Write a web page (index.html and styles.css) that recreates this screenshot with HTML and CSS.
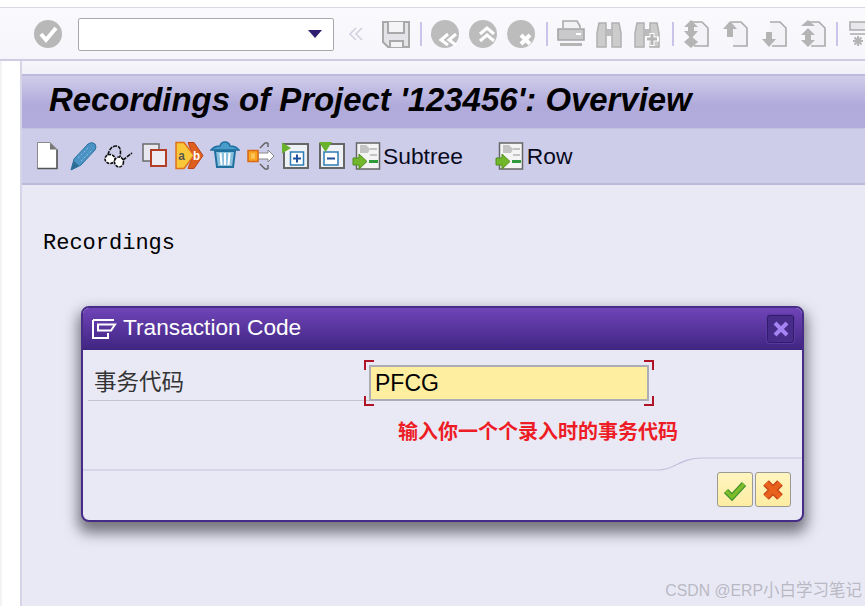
FILE: index.html
```html
<!DOCTYPE html>
<html lang="en">
<head>
<meta charset="utf-8">
<title>Recordings of Project</title>
<link rel="stylesheet" href="styles.css">
</head>
<body>
<div class="top-strip"></div>
<div class="sys-bar">
  <svg class="tool" viewBox="0 0 30 30"><circle cx="15" cy="15" r="14" fill="#b8b8b8"/><path d="M8 15l5 6L23 9" fill="none" stroke="#fff" stroke-width="4"/></svg>
  <div class="combo"><svg class="combo-arrow" viewBox="0 0 14 10"><path d="M0 1h14L7 9z" fill="#2e1c70"/></svg></div>
  <svg class="chev" viewBox="0 0 18 16"><path d="M9 2L3 8l6 6M15 2L9 8l6 6" fill="none" stroke="#cfcfdd" stroke-width="1.5"/></svg>
  <svg class="tool save" viewBox="0 0 30 30"><path d="M2 3h26v25H7l-5-5z" fill="#e4e4e8" stroke="#a9a9a9" stroke-width="2"/><path d="M7 3v11h16V3M9 28v-6h13v6" fill="#f4f4f6" stroke="#a9a9a9" stroke-width="2"/></svg>
  <i class="sep"></i>
  <svg class="tool" viewBox="0 0 30 30"><circle cx="15" cy="15" r="14" fill="#bcbcbc"/><path d="M18 15l-7 6 7 5M26 15l-7 6 7 5" fill="none" stroke="#fff" stroke-width="3"/></svg>
  <svg class="tool" viewBox="0 0 30 30"><circle cx="15" cy="15" r="14" fill="#bcbcbc"/><path d="M12 15l7-6 7 6M12 22l7-6 7 6" fill="none" stroke="#fff" stroke-width="3"/></svg>
  <svg class="tool" viewBox="0 0 30 30"><circle cx="15" cy="15" r="14" fill="#bcbcbc"/><path d="M15 16l9 9M24 16l-9 9" fill="none" stroke="#fff" stroke-width="4"/></svg>
  <i class="sep"></i>
  <svg class="tool" viewBox="0 0 30 30"><path d="M7 9V2h14l3 5v2" fill="#f2f2f5" stroke="#aaa" stroke-width="1.6"/><path d="M2 10h26v11H2z" fill="#c9c9cc" stroke="#a5a5a5" stroke-width="1.6"/><path d="M20 14h5v2h-5z" fill="#fff"/><path d="M4 24h22v3H4z" fill="#b5b5b5"/></svg>
  <svg class="tool" viewBox="0 0 30 30"><path d="M5 4h7v24H3V14zM18 4h7l2 10v14h-9z" fill="#ccc" stroke="#b0b0b0" stroke-width="1.5"/><path d="M12 10h6v7h-6z" fill="#bbb"/></svg>
  <svg class="tool" viewBox="0 0 30 30"><path d="M5 4h7v24H3V14zM18 4h7l2 10v14h-9z" fill="#ccc" stroke="#b0b0b0" stroke-width="1.5"/><path d="M12 10h6v7h-6z" fill="#bbb"/><path d="M20 14v13M14 20h13" stroke="#fff" stroke-width="5"/><path d="M20 15v11M15 20h10" stroke="#b5b5b5" stroke-width="3"/></svg>
  <i class="sep"></i>
  <svg class="tool tool-wide" viewBox="0 0 30 30"><use href="#page"/><path d="M9 1l7 7h-4v4l4 0-7 8-7-8h4V8H2z" fill="#b4b4b4"/><path d="M9 17l7 6-7 6-7-6z" fill="#b4b4b4"/></svg>
  <svg class="tool tool-wide" viewBox="0 0 30 30"><use href="#page"/><path d="M9 2l7 8h-4v8H6v-8H2z" fill="#b4b4b4"/></svg>
  <svg class="tool tool-wide" viewBox="0 0 30 30"><use href="#page"/><path d="M9 28l7-8h-4v-7H6v7H2z" fill="#b4b4b4"/></svg>
  <svg class="tool tool-tight" viewBox="0 0 30 30"><use href="#page"/><path d="M9 1l7 6H2zM9 28l7-7h-4v-5l4 0-7-7-7 7h4v5H2z" fill="#b4b4b4"/></svg>
  <i class="sep sep-end"></i>
  <svg class="tool" viewBox="0 0 30 30"><path d="M1 3h26v8H1z" fill="#e8e8ec" stroke="#aaa" stroke-width="1.5"/><path d="M1 15h26" stroke="#aaa" stroke-width="1.5"/><path d="M9 17v10M4 22h10M5.500 18.500l7 7M12.500 18.500l-7 7" stroke="#b4b4b4" stroke-width="2"/></svg>
</div>

<svg class="defs" width="0" height="0"><defs>
  <path id="page" d="M10 3h10l6 6v18H12" fill="#f3f3f7" stroke="#aaa" stroke-width="1.600"/>
  <g id="tree"><path d="M4.500 2h23v26h-23z" fill="#f4f4f4" stroke="#666" stroke-width="1.500"/><path d="M8 4h6l4 4-2 4H8zM18 7h7v2h-7zM18 13h7v2h-7z" fill="#c4c4c4"/><path d="M17 19h9v3h-9z" fill="#2f9a3c"/><path d="M1 17h6v-4l8 7.500-8 7.500v-4H1z" fill="#72b62c" stroke="#4f8f1c"/></g>
</defs></svg>

<div class="main">
  <div class="gutter"></div>
  <div class="panel">
    <div class="panel-top"></div>
    <h1 class="title">Recordings of Project '123456': Overview</h1>
    <div class="app-bar">
      <svg class="atool" viewBox="0 0 30 30"><path d="M5.500 1.500H18L25 8.500V27.500H5.500z" fill="#fff" stroke="#8a8a8a"/><path d="M25 8.500V27.500H5.500" fill="none" stroke="#555" stroke-width="1.500"/><path d="M18 1.500V8.500H25z" fill="#777"/></svg>
      <svg class="atool" viewBox="0 0 30 30"><path d="M3 29L6 18 20 3Q24 0 27 3 29 6 27 9L13 24z" fill="#4b93c4" stroke="#2c739f"/><path d="M3 29L6 20 11 25z" fill="#2c6c95"/><path d="M10 17L21 6M13 20L24 9" stroke="#8cc0e0" stroke-dasharray="2 2"/></svg>
      <svg class="atool" viewBox="0 0 30 30"><g fill="#fff" stroke="#111" stroke-width="1.600" stroke-dasharray="3 1"><ellipse cx="7" cy="18" rx="5" ry="4.500"/><ellipse cx="16" cy="21" rx="4.500" ry="5"/></g><path d="M5 14Q7 5 13 5T17 16M20 19L29 12" fill="none" stroke="#111" stroke-width="1.600" stroke-dasharray="4 1"/></svg>
      <svg class="atool" viewBox="0 0 30 30"><path d="M4 3h16v17H4z" fill="#e8e8f0" stroke="#6a6a6a" stroke-width="1.500"/><path d="M12 9h15v16H12z" fill="#ececf2" stroke="#b43d26" stroke-width="2"/></svg>
      <svg class="atool" viewBox="0 0 30 30"><path d="M14 1.500h6l9 13-9 13h-6l5-13z" fill="#df5f1e" stroke="#b9401a"/><path d="M2 1.500h8l10 13-10 13H2z" fill="#f9c83a" stroke="#e0701a" stroke-width="1.500"/><text class="ab-a" x="4" y="19">a</text><text class="ab-b" x="19" y="19">b</text></svg>
      <svg class="atool" viewBox="0 0 30 30"><path d="M1 9Q4 5 10 5 11 1 15 1T20 5Q26 5 29 9z" fill="#4a9ccb" stroke="#1f6f9f" stroke-width="1.500"/><path d="M5 10h20l-2 16H7z" fill="#8cc1de" stroke="#1f6f9f" stroke-width="2"/><path d="M10.500 12l1 12M15 12v12M19.500 12l-1 12" stroke="#fff" stroke-width="2"/></svg>
      <svg class="atool" viewBox="0 0 30 30"><path d="M13 12h10V9l6 6-6 6v-3H13z" fill="#fff" stroke="#888"/><path d="M3 9.500h10v11H3z" fill="#f8a51f" stroke="#d8681a" stroke-width="1.500"/><path d="M6 12.500h4v5H6z" fill="#fcc65c"/><path d="M15 7l5-5h3M23 2v4M15 23l5 5h3M23 28v-4" fill="none" stroke="#666" stroke-width="1.500"/></svg>
      <svg class="atool" viewBox="0 0 30 30"><path d="M3 3h24v24H3z" fill="#eef1f6" stroke="#666" stroke-width="2"/><path d="M9.500 11h13v13h-13z" fill="#fff" stroke="#2e7cb5" stroke-width="1.500"/><path d="M16 13.500v8M12 17.500h8" stroke="#1d4f9c" stroke-width="2"/><path d="M1 1.500l9 5.500-9 5.500z" fill="#68b22c"/></svg>
      <svg class="atool" viewBox="0 0 30 30"><path d="M4 3h24v24H4z" fill="#eef1f6" stroke="#666" stroke-width="2"/><path d="M8 11h14v13H8z" fill="#fff" stroke="#2e7cb5" stroke-width="1.500"/><path d="M11 17.500h8" stroke="#1d4f9c" stroke-width="2"/><path d="M3 1h13l-6.500 10z" fill="#68b22c"/></svg>
      <svg class="atool" viewBox="0 0 30 30"><use href="#tree"/></svg>
      <span class="atext">Subtree</span>
      <svg class="atool row-icon" viewBox="0 0 30 30"><use href="#tree"/></svg>
      <span class="atext">Row</span>
    </div>
    <div class="content">
      <div class="heading">Recordings</div>
      <div class="dialog">
        <div class="dlg-title">
          <svg class="dlg-icon" viewBox="0 0 26 20"><path d="M1 1h21M1 1v18h15v-5M6 5.500h17l-4 6H6z" fill="none" stroke="#fff" stroke-width="2"/></svg>
          <span class="dlg-caption">Transaction Code</span>
          <span class="dlg-close"><svg viewBox="0 0 16 16"><path d="M2 2l12 12M14 2L2 14" stroke="#a583f2" stroke-width="4"/></svg></span>
        </div>
        <div class="dlg-body">
          <div class="field-row">
            <span class="field-label">事务代码</span>
            <span class="field-wrap">
              <span class="field-input">PFCG</span>
              <i class="mark tl"></i><i class="mark tr"></i><i class="mark bl"></i><i class="mark br"></i>
            </span>
          </div>
          <div class="hint">输入你一个个录入时的事务代码</div>
          <svg class="curve" viewBox="0 0 718 14" preserveAspectRatio="none"><path d="M0 13H575C590 13 597 1 618 1H718" fill="none" stroke="#c3bfdc" stroke-width="1.200"/></svg>
          <div class="dlg-actions">
            <button class="dlg-btn" type="button"><svg viewBox="0 0 24 24"><path d="M3 13l6 6L21 6" fill="none" stroke="#3e8f2f" stroke-width="6"/><path d="M3 13l6 6L21 6" fill="none" stroke="#7dbd2a" stroke-width="3.500"/></svg></button>
            <button class="dlg-btn" type="button"><svg viewBox="0 0 24 24"><path d="M5 5l14 14M19 5L5 19" stroke="#c9481a" stroke-width="8"/><path d="M5 5l14 14M19 5L5 19" stroke="#e8621c" stroke-width="5"/></svg></button>
          </div>
        </div>
      </div>
      <div class="watermark"><span class="wm-latin">CSDN @ERP</span>小白学习笔记</div>
    </div>
  </div>
</div>
</body>
</html>
```

FILE: styles.css
```css
* { box-sizing: border-box; }
html, body { height: 100%; }
body {
  margin: 0;
  height: 606px;
  overflow: hidden;
  display: flex;
  flex-direction: column;
  background: #fff;
  font-family: "Liberation Sans", Arial, sans-serif;
}
.defs { position: absolute; }
.top-strip {
  height: 8px;
  flex: none;
  border-bottom: 1px solid #d9d6e8;
}
.sys-bar {
  height: 53px;
  flex: none;
  display: flex;
  align-items: center;
  padding: 1px 0 0 33px;
  background: linear-gradient(#fafafd, #f6f5fb);
  border-bottom: 2px solid #cfcbe3;
  white-space: nowrap;
}
.tool { width: 30px; height: 30px; flex: none; margin-right: 8px; }
.tool-wide { margin-right: 9px; }
.tool-tight { margin-right: 7px; }
.combo {
  width: 256px;
  height: 33px;
  margin-left: 7px;
  flex: none;
  background: #fff;
  border: 1px solid #a9a9ad;
  border-radius: 2px;
  display: flex;
  align-items: center;
  justify-content: flex-end;
  padding-right: 11px;
}
.combo-arrow { width: 14px; height: 10px; }
.chev { width: 18px; height: 16px; margin-left: 13px; flex: none; }
.save { margin-left: 16px; margin-right: 7px; }
.sep { width: 2px; height: 24px; background: #c9c5e8; flex: none; margin: 0 8px 0 2px; }
.sep-end { margin: 0 11px 0 0; }
.main { flex: 1; display: flex; min-height: 0; }
.gutter { width: 20px; flex: none; background: #fff; border-left: 2px solid #f3f3f6; }
.panel {
  flex: 1;
  min-width: 0;
  display: flex;
  flex-direction: column;
  border-left: 2px solid #d6d4e7;
}
.panel-top {
  height: 15px;
  flex: none;
  background: linear-gradient(#f6f6fb, #f1f0f8);
  border-bottom: 2px solid #bfbad9;
}
.title {
  margin: 0;
  height: 53px;
  flex: none;
  padding: 2px 0 0 27px;
  font-size: 32.900px;
  font-weight: bold;
  font-style: italic;
  line-height: 44px;
  color: #000;
  background: linear-gradient(#d0cdea, #b1abdb 55%, #b2acdc);
  border-bottom: 1px solid #c6c3df;
  white-space: nowrap;
}
.app-bar {
  height: 56px;
  flex: none;
  display: flex;
  align-items: center;
  gap: 5.500px;
  padding-left: 10px;
  background: #cdcdea;
  border-bottom: 2px solid #bdb9da;
}
.atool { width: 30px; height: 30px; flex: none; }
.atext { font-size: 22.800px; color: #0a0a1e; margin-left: -4px; }
.row-icon { margin-left: 27px; }
.ab-a, .ab-b { font: bold 12px "Liberation Mono", monospace; }
.ab-a { fill: #5a5a50; }
.ab-b { fill: #fff; }
.content {
  flex: 1;
  position: relative;
  background: #e9e9f6;
  padding: 45px 0 0 21px;
}
.heading { font: 22px/28px "Liberation Mono", monospace; color: #000; }
.dialog {
  position: absolute;
  left: 59px;
  top: 121px;
  width: 723px;
  height: 216px;
  background: #e9e9f6;
  border: 2px solid #472c87;
  border-radius: 8px;
  box-shadow: 0 8px 14px 3px rgba(40, 40, 50, .6);
  display: flex;
  flex-direction: column;
}
.dlg-title {
  height: 42px;
  flex: none;
  display: flex;
  align-items: center;
  padding: 0 8px 0 9px;
  background: linear-gradient(#7044b8, #3f2581);
  border-radius: 6px 6px 0 0;
}
.dlg-icon { width: 26px; height: 20px; flex: none; }
.dlg-caption { margin-left: 5px; padding-bottom: 4px; font-size: 22.700px; color: #fff; flex: 1; }
.dlg-close {
  width: 27px;
  height: 28px;
  display: flex;
  align-items: center;
  justify-content: center;
  background: #482c8a;
  border: 1px solid #331c6e;
  border-radius: 3px;
  box-shadow: 0 0 0 1px #5a3aa2;
}
.dlg-close svg { width: 16px; height: 16px; }
.dlg-body { flex: 1; display: flex; flex-direction: column; }
.field-row {
  margin: 10px 0 0 5px;
  height: 42px;
  display: flex;
  align-items: flex-start;
  position: relative;
}
.field-label {
  width: 281px;
  height: 41px;
  padding-left: 6px;
  font: 22.500px/40px "Noto Sans CJK SC", sans-serif;
  color: #333;
  border-bottom: 1px solid #c4c4ce;
}
.field-wrap {
  position: relative;
  margin-top: 5px;
  width: 280px;
  height: 36px;
}
.field-input {
  display: block;
  height: 36px;
  padding-left: 4px;
  font-size: 23px;
  line-height: 32px;
  color: #000;
  background: #fdeea0;
  border: 2px solid #adadb5;
}
.mark { position: absolute; width: 10px; height: 10px; border: 2px solid #b01226; }
.tl { left: -5px; top: -5px; border-right: 0; border-bottom: 0; }
.tr { right: -5px; top: -5px; border-left: 0; border-bottom: 0; }
.bl { left: -5px; bottom: -5px; border-right: 0; border-top: 0; }
.br { right: -5px; bottom: -5px; border-left: 0; border-top: 0; }
.hint {
  margin: 16px 0 0 315px;
  font: bold 20px/26px "Noto Sans CJK SC", sans-serif;
  color: #ee1c25;
}
.curve { display: block; width: 100%; height: 14px; margin-top: 13px; flex: none; }
.dlg-actions { display: flex; justify-content: flex-end; gap: 2px; padding: 1px 11px 0 0; }
.dlg-btn {
  width: 36px;
  height: 35px;
  padding: 0;
  display: flex;
  align-items: center;
  justify-content: center;
  background: linear-gradient(#fff5c0, #fdeca2);
  border: 1.500px solid #9a9a92;
  border-radius: 3px;
}
.dlg-btn svg { width: 24px; height: 24px; }
.watermark {
  position: absolute;
  right: 3px;
  bottom: 5px;
  font: 16.500px/20px "Liberation Sans", "Noto Sans CJK SC", sans-serif;
  color: #b9b9c4;
  white-space: nowrap;
}
.wm-latin { font-size: 15.800px; }
```
